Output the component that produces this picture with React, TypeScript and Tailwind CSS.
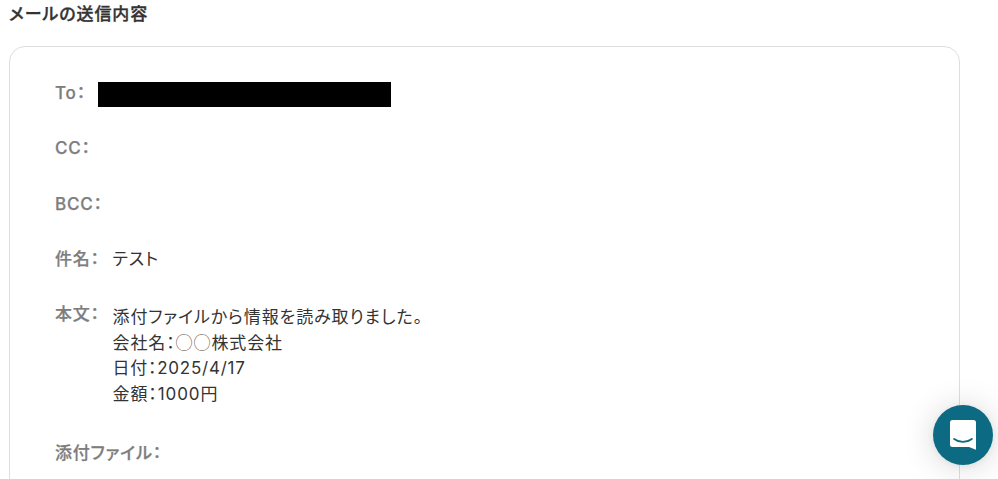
import React from 'react';

interface FieldProps {
  label: string;
  className?: string;
  children?: React.ReactNode;
}

const Field: React.FC<FieldProps> = ({ label, className = '', children }) => (
  <div className={`flex items-start text-[17px] leading-[26px] ${className}`}>
    <span className="shrink-0 font-medium tracking-[0.8px] text-[#7d7d7d] [-webkit-text-stroke:0.25px_#7d7d7d]">{label}</span>
    {children}
  </div>
);

const App: React.FC = () => (
  <div lang="ja" className="relative h-[479px] overflow-hidden bg-white pl-[9px] font-['Inter','Noto_Sans_CJK_JP',sans-serif] tracking-[0.9px] text-[#333] [font-feature-settings:'palt']">
    <h2 className="h-[46px] text-[17px] leading-[28px] font-medium [-webkit-text-stroke:0.35px_#333]">メールの送信内容</h2>
    <div className="h-[480px] w-[951px] rounded-[16px] border border-[#dedede] pt-[33px] pl-[45px]">
      <Field label="To：" className="h-[55px]">
        <div className="mt-[2px] ml-[12px] h-[25px] w-[293px] bg-black" />
      </Field>
      <Field label="CC：" className="h-[56px]" />
      <Field label="BCC：" className="h-[55px]" />
      <Field label="件名：" className="h-[55px]">
        <span className="ml-[12.6px]">テスト</span>
      </Field>
      <Field label="本文：" className="h-[139px]">
        <div className="mt-[4px] ml-[12.6px] leading-[25.6px]">
          <p>添付ファイルから情報を読み取りました。</p>
          <p>
            会社名：<span className="font-['Noto_Sans_CJK_JP',sans-serif] leading-none font-light text-[#444]">◯◯</span>株式会社
          </p>
          <p className="tracking-[0.75px]">日付：2025/4/17</p>
          <p>金額：1000円</p>
        </div>
      </Field>
      <Field label="添付ファイル：" />
    </div>
    <button aria-label="Open chat" className="absolute top-[405px] left-[933px] flex h-[60px] w-[60px] items-center justify-center rounded-full bg-[#0c6b83] shadow-[0_1px_6px_rgba(0,0,0,0.06),0_2px_32px_rgba(0,0,0,0.16)]">
      <svg width="26" height="30" viewBox="0 0 26 30">
        <path d="M2.5 0h21A2.5 2.5 0 0 1 26 2.5v27.300L19 27H2.5A2.5 2.5 0 0 1 0 24.500v-22A2.500 2.500 0 0 1 2.500 0z" fill="#fff" />
        <path d="M4.200 18.900c5.200 4 12.400 4 17.600 0" fill="none" stroke="#0c6b83" strokeWidth="1.900" strokeLinecap="round" />
      </svg>
    </button>
  </div>
);

export default App;
